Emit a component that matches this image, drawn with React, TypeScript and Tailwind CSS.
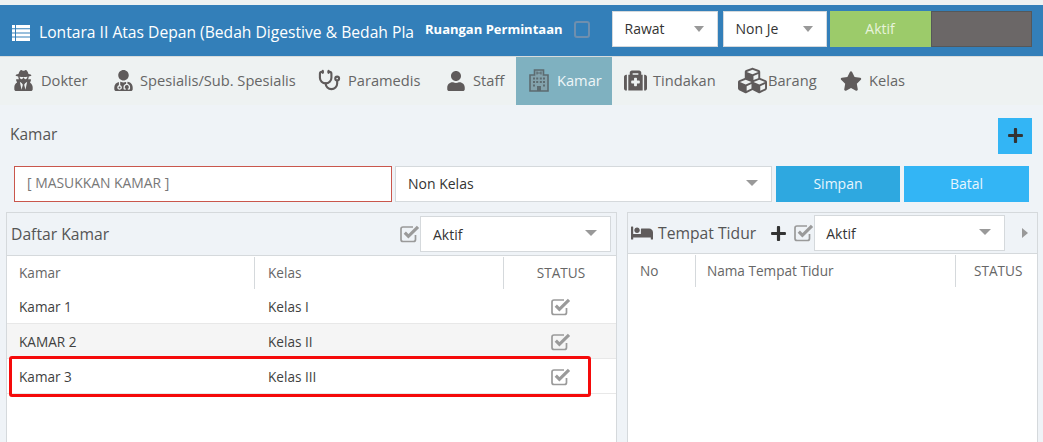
import { FaBed, FaCubes, FaMedkit, FaPlus, FaStar, FaUser, FaUserMd, FaUserSecret } from 'react-icons/fa';
import { Stethoscope } from 'lucide-react';
import type { ReactNode } from 'react';

// FA4 style glyphs the packages don't carry in the same shape
function ListIcon() {
  return (
    <svg width="18" height="16" viewBox="0 0 18 16" fill="#fff" className="shrink-0">
      <path d="M0 0h3v3.2H0zM4 0h14v3.2H4zM0 4.2h3v3.2H0zM4 4.2h14v3.2H4zM0 8.4h3v3.2H0zM4 8.4h14v3.2H4zM0 12.6h3V16H0zM4 12.6h14V16H4z" />
    </svg>
  );
}

function CheckIcon({ className = '' }: { className?: string }) {
  return (
    <svg width="20" height="18" viewBox="0 0 20 18" fill="none" className={`shrink-0 ${className}`}>
      <path d="M15.5 10v4.5a2 2 0 0 1-2 2H3a2 2 0 0 1-2-2V4a2 2 0 0 1 2-2h10" stroke="#9a9a9a" strokeWidth="1.7" />
      <path d="M4.8 7.6l3.6 3.7L18 1.8" stroke="#9a9a9a" strokeWidth="3.2" />
    </svg>
  );
}

function HospitalIcon() {
  return (
    <svg width="20" height="23" viewBox="0 0 20 23" className="shrink-0">
      <path d="M5.5 1h9v5h4.5v16H1V6h4.5z" fill="#83a2ac" stroke="#5c6b70" strokeWidth="1.6" />
      <path d="M8 2.5v3M12 2.5v3M8 4h4" stroke="#5c6b70" strokeWidth="1.2" fill="none" />
      <path
        d="M4 8.5h2v2H4zM7.2 8.5h2v2h-2zM10.8 8.5h2v2h-2zM14 8.5h2v2h-2zM4 12h2v2H4zM7.2 12h2v2h-2zM10.8 12h2v2h-2zM14 12h2v2h-2zM4 15.5h2v2H4zM14 15.5h2v2h-2z"
        fill="#5c6b70"
      />
      <path d="M8 22v-5h4v5z" fill="#5c6b70" />
    </svg>
  );
}

const tabs: { icon: ReactNode; label: string; iconBox: string; tabBox: string; active?: boolean }[] = [
  { icon: <FaUserSecret size={21} />, label: 'Dokter', iconBox: 'w-[28px]', tabBox: 'w-[100px] pl-[13px]' },
  { icon: <FaUserMd size={21} />, label: 'Spesialis/Sub. Spesialis', iconBox: 'w-[27px]', tabBox: 'w-[207px] pl-[13px]' },
  { icon: <Stethoscope size={23} strokeWidth={2.2} className="-ml-[2px]" />, label: 'Paramedis', iconBox: 'w-[28px]', tabBox: 'w-[126px] pl-[13px]' },
  { icon: <FaUser size={20} />, label: 'Staff', iconBox: 'w-[27px]', tabBox: 'w-[83px] pl-[13px]' },
  { icon: <HospitalIcon />, label: 'Kamar', iconBox: 'w-[28px]', tabBox: 'w-[96px] pl-[13px]', active: true },
  { icon: <FaMedkit size={23} />, label: 'Tindakan', iconBox: 'w-[29px]', tabBox: 'w-[114px] pl-[12px]' },
  { icon: <FaCubes size={29} />, label: 'Barang', iconBox: 'w-[30px]', tabBox: 'w-[102px] pl-[12px]' },
  { icon: <FaStar size={22} />, label: 'Kelas', iconBox: 'w-[29px]', tabBox: 'w-[80px] pl-[12px]' },
];

const rooms = [
  { name: 'Kamar 1', kelas: 'Kelas I' },
  { name: 'KAMAR 2', kelas: 'Kelas II', shaded: true },
  { name: 'Kamar 3', kelas: 'Kelas III' },
];

function SelectBox({ label, className, caret }: { label: string; className: string; caret: string }) {
  return (
    <div className={`relative flex items-center bg-white text-[14px] text-[#333] border border-[#d5d9dc] ${className}`}>
      <span className="whitespace-nowrap">{label}</span>
      <span className={`absolute h-0 w-0 border-x-transparent border-t-[#999] ${caret}`} />
    </div>
  );
}

const smallCaret = 'top-[14px] right-[13px] border-x-[5px] border-t-[6px]';
const bigCaret = 'top-[13px] right-[13px] border-x-[6px] border-t-[6px]';

export default function App() {
  return (
    <div
      className="h-[442px] w-[1043px] overflow-hidden bg-[#eef2f2] pt-[5px] text-[#555]"
      style={{ fontFamily: '"Open Sans", sans-serif' }}
    >
      <header className="flex h-[51px] items-center bg-[#337fb9] pl-[12px] text-white">
        <div className="mt-[5px] flex items-center">
          <ListIcon />
          <div className="ml-[9px] w-[378px] whitespace-nowrap text-[15.65px]">
            Lontara II Atas Depan (Bedah Digestive &amp; Bedah Pla
          </div>
        </div>
        <span className="mb-[2px] ml-[8px] whitespace-nowrap text-[13px] font-bold">Ruangan Permintaan</span>
        <span className="mb-[2px] ml-[11px] h-[17px] w-[16px] rounded-[3px] border-2 border-[#6f8fae] bg-[#337fb9]" />
        <div className="mb-[4px] ml-[22px] flex items-center">
          <SelectBox label="Rawat" className="h-[36px] w-[106px] pl-[12px]" caret={smallCaret} />
          <SelectBox label="Non Je" className="ml-[5px] h-[36px] w-[104px] pl-[12px]" caret={smallCaret} />
          <div className="ml-[3px] flex h-[36px] w-[101px] items-center justify-center bg-[#9ccb6a] text-[14px] text-[#e8f3dc]">
            Aktif
          </div>
          <div className="h-[36px] w-[101px] border border-[#55585a] bg-[#6b6767]" />
        </div>
      </header>

      <nav className="flex h-[49px] items-stretch border-t border-[#d8dcdc] text-[14.65px] text-[#666]">
        {tabs.map((t) => (
          <div
            key={t.label}
            className={`flex items-center whitespace-nowrap pb-[1px] ${t.tabBox} ${t.active ? 'bg-[#7fb1c0] text-[#eef6f8]' : ''}`}
          >
            <span className={`flex shrink-0 text-[#5f5b5b] ${t.iconBox}`}>{t.icon}</span>
            {t.label}
          </div>
        ))}
      </nav>

      <main className="h-[340px] bg-[#eff3f7] pl-[6px]">
        <div className="flex h-[61px] items-center justify-between pr-[11px]">
          <span className="mb-[2px] ml-[4px] text-[15.5px] text-[#555]">Kamar</span>
          <div className="flex h-[36px] w-[34px] items-center justify-center bg-[#33b5f5] text-[#333]">
            <FaPlus size={17} />
          </div>
        </div>

        <div className="flex h-[36px] pl-[8px] text-[14px]">
          <div className="flex w-[378px] items-center border border-[#c9564c] bg-white pb-[1px] pl-[12px] text-[13.9px] text-[#777]">
            [ MASUKKAN KAMAR ]
          </div>
          <SelectBox label="Non Kelas" className="ml-[3px] w-[377px] pb-[1px] pl-[12px]" caret={bigCaret} />
          <div className="ml-[4px] flex w-[124px] items-center justify-center bg-[#2ea8e0] pb-[1px] text-[#e8f6fd]">Simpan</div>
          <div className="ml-[4px] flex w-[125px] items-center justify-center bg-[#33b5f5] pb-[1px] text-[#e8f6fd]">Batal</div>
        </div>

        <div className="mt-[10px] flex items-start">
          <section className="relative h-[230px] w-[611px] border-x border-t border-[#d5d9dc]">
            <div className="flex h-[43px] items-center justify-between border-b border-[#d5d9dc] pr-[5px] pl-[4px]">
              <span className="pt-[1px] text-[15.7px]">Daftar Kamar</span>
              <div className="flex items-center">
                <CheckIcon />
                <SelectBox label="Aktif" className="h-[36px] w-[191px] pl-[12px]" caret={bigCaret} />
              </div>
            </div>
            <div className="h-full bg-white text-[13.6px]">
              <div className="flex h-[33px] items-center pt-[1px] text-[#666]">
                <div className="flex h-full w-[248px] items-center border-r border-[#d5d9dc] pl-[12px]">Kamar</div>
                <div className="flex h-full w-[249px] items-center border-r border-[#d5d9dc] pl-[13px]">Kelas</div>
                <div className="flex-1 pl-[2px] text-center">STATUS</div>
              </div>
              {rooms.map((r) => (
                <div
                  key={r.name}
                  className={`flex h-[35px] items-center border-b border-[#e8e8e8] pt-[2px] text-[#3f3f3f] ${r.shaded ? 'bg-[#f5f5f5]' : ''}`}
                >
                  <div className="w-[248px] pl-[12px]">{r.name}</div>
                  <div className="w-[249px] pl-[13px]">{r.kelas}</div>
                  <div className="flex flex-1 justify-center pl-[1px]">
                    <CheckIcon />
                  </div>
                </div>
              ))}
            </div>
            <div className="absolute top-[143px] left-[2px] h-[41px] w-[582px] rounded-[3px] border-[3px] border-[#f50a0a]" />
          </section>

          <section className="ml-[10px] h-[230px] w-[411px] border-x border-t border-[#d5d9dc]">
            <div className="flex h-[41px] items-center border-b border-[#d5d9dc] pl-[3px]">
              <FaBed size={22} className="text-[#5f5b5b]" />
              <span className="ml-[5px] pt-[1px] text-[15.7px]">Tempat Tidur</span>
              <FaPlus size={17} className="ml-[14px] text-[#333]" />
              <CheckIcon className="ml-[7px]" />
              <SelectBox label="Aktif" className="h-[36px] w-[191px] pl-[11px]" caret={bigCaret} />
              <span className="ml-[17px] h-0 w-0 border-y-[5px] border-l-[6px] border-y-transparent border-l-[#999]" />
            </div>
            <div className="h-full bg-white text-[13.6px] text-[#666]">
              <div className="flex h-[33px] items-center pt-[1px]">
                <div className="flex h-full w-[68px] items-center border-r border-[#d5d9dc] pl-[12px]">No</div>
                <div className="flex h-full w-[260px] items-center border-r border-[#d5d9dc] pl-[11px]">
                  Nama Tempat Tidur
                </div>
                <div className="flex-1 pl-[18px]">STATUS</div>
              </div>
            </div>
          </section>
        </div>
      </main>
    </div>
  );
}
